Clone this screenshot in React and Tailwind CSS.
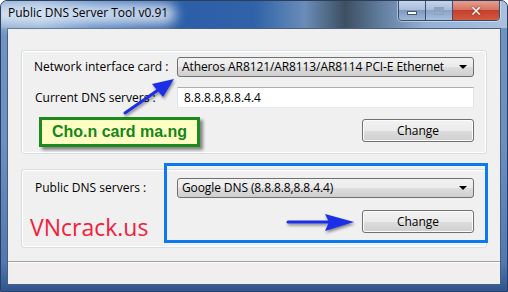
// App.jsx - Public DNS Server Tool window (Win7 style)

const uiFont = { fontFamily: '"Open Sans", "Noto Sans", sans-serif' };

const ComboBox = ({ value, className = "" }) => (
  <div
    className={`flex items-center h-[20px] rounded-[3px] border border-[#707070] bg-[linear-gradient(#f2f2f2_0%,#ebebeb_50%,#dddddd_51%,#cfcfcf_100%)] pl-[4px] pr-[6px] ${className}`}
  >
    <span className="flex-1 whitespace-nowrap text-[12px] text-black leading-none tracking-[-0.1px]">{value}</span>
    <span className="w-0 h-0 border-l-[4px] border-r-[4px] border-t-[4px] border-l-transparent border-r-transparent border-t-black"></span>
  </div>
);

const PushButton = ({ label }) => (
  <button className="w-[112px] h-[23px] rounded-[3px] border border-[#707070] bg-[linear-gradient(#f2f2f2_0%,#ebebeb_50%,#dddddd_51%,#cfcfcf_100%)] text-[12px] text-black leading-none shadow-[inset_0_0_0_1px_#fcfcfc]">
    {label}
  </button>
);

const GroupBox = ({ children, className = "" }) => (
  <div className={`rounded-[3px] border border-[#d5dfe5] shadow-[inset_0_0_0_1px_#ffffff] ${className}`}>
    {children}
  </div>
);

function App() {
  return (
    <div className="w-[508px] h-[292px] bg-white" style={uiFont}>
      <div className="relative w-[508px] h-[292px] overflow-hidden rounded-t-[7px] border border-[#2c3e5a] bg-[linear-gradient(180deg,#6f95c6_0%,#6a8fc2_50%,#4f79b4_90%,#2e5590_100%)]">
        {/* title bar */}
        <div className="relative flex items-start h-[27px] bg-[linear-gradient(90deg,#7fa2cf_0%,#8eaed6_8%,#4f80c0_18%,#2b5ea8_32%,#2f62a8_50%,#6a8db8_60%,#3d4f62_68%,#6683a6_76%,#93b0d6_84%,#a9c1df_100%)]">
          <div className="absolute left-[-10px] top-[2px] w-[185px] h-[22px] rounded-full bg-[#e6eef8] opacity-80 blur-[6px]"></div>
          <span className="relative ml-[7px] mt-[6px] text-[12px] leading-none text-black">
            Public DNS Server Tool v0.91
          </span>
          <div className="absolute top-[-1px] right-[7px] flex h-[21px] rounded-b-[4px] border border-[#3b4e6c] overflow-hidden shadow-[0_0_0_1px_rgba(255,255,255,0.4)]">
            <div className="w-[27px] flex items-center justify-center border-r border-[#3b4e6c] bg-[linear-gradient(#c4d4ea_0%,#a9bedb_45%,#7f99be_50%,#9fb7d8_100%)]">
              <span className="mt-[5px] w-[10px] h-[4px] bg-white border border-[#44546c]"></span>
            </div>
            <div className="w-[27px] flex items-center justify-center border-r border-[#3b4e6c] bg-[linear-gradient(#c4d4ea_0%,#a9bedb_45%,#8aa3c6_50%,#a9bfdd_100%)]">
              <span className="w-[10px] h-[8px] border border-[#8fa2bd] shadow-[inset_0_2px_0_#8fa2bd]"></span>
            </div>
            <div className="w-[46px] flex items-center justify-center bg-[linear-gradient(#e6a090_0%,#d77563_45%,#c4402e_50%,#d4583e_100%)]">
              <span className="text-[14px] font-bold leading-none text-white" style={{ fontFamily: '"DejaVu Sans", sans-serif', textShadow: '0 0 2px #5a1a10' }}>
                ✕
              </span>
            </div>
          </div>
        </div>

        {/* client area */}
        <div className="ml-[6px] mr-[6px] h-[257px] border border-[#4b5d78] bg-[#f0f0f0] flex flex-col">
          <div className="px-[13px] pt-[21px]">
            <GroupBox className="h-[104px] pl-[12px] pr-[11px] pt-[6px]">
              <div className="flex items-center h-[20px]">
                <span className="w-[143px] text-[12px] text-black">Network interface card :</span>
                <ComboBox className="w-[297px]" value="Atheros AR8121/AR8113/AR8114 PCI-E Ethernet" />
              </div>
              <div className="flex items-center h-[21px] mt-[10px]">
                <span className="w-[143px] pl-[1px] text-[12px] text-black">Current DNS servers :</span>
                <div className="w-[297px] h-[21px] flex items-center pl-[6px] bg-white border border-[#abadb3] border-l-[#e2e3ea] border-r-[#e2e3ea] border-b-[#e3e9ef] text-[12px] text-black">
                  8.8.8.8,8.8.4.4
                </div>
              </div>
              <div className="flex justify-end mt-[11px] pr-[1px]">
                <PushButton label="Change" />
              </div>
            </GroupBox>

            <GroupBox className="mt-[15px] h-[79px] pl-[12px] pr-[11px] pt-[8px]">
              <div className="flex items-center h-[20px]">
                <span className="w-[143px] pl-[1px] text-[12px] text-black">Public DNS servers :</span>
                <ComboBox className="w-[297px]" value="Google DNS (8.8.8.8,8.8.4.4)" />
              </div>
              <div className="flex justify-end mt-[12px] pr-[1px]">
                <PushButton label="Change" />
              </div>
            </GroupBox>
          </div>

          <div className="mt-auto h-[23px] border-t border-[#a0a0a0] bg-[#f0eeee] shadow-[inset_0_1px_0_#ffffff]"></div>
        </div>

        {/* annotations laid over the window */}
        <div className="absolute left-[38px] top-[116px] w-[161px] h-[30px] flex items-center justify-center border-[3px] border-[#1c8a1c] bg-[#ffffc4] shadow-[3px_3px_3px_rgba(0,0,0,0.45)]">
          <span className="text-[16px] font-bold text-[#15851a] leading-none" style={{ fontFamily: '"Liberation Sans", Arial, sans-serif' }}>
            Cho.n card ma.ng
          </span>
        </div>

        <div className="absolute left-[163px] top-[162px] w-[324px] h-[80px] border-[3px] border-[#0b7af2]"></div>

        <span className="absolute left-[29px] top-[215px] text-[23px] leading-none text-[#f2203c]">VNcrack.us</span>

        <svg className="absolute left-0 top-0 pointer-events-none" width="508" height="292" viewBox="0 0 508 292">
          <defs>
            <filter id="sh" x="-20%" y="-20%" width="140%" height="140%">
              <feDropShadow dx="1" dy="2" stdDeviation="1.5" floodColor="#000" floodOpacity="0.45" />
            </filter>
          </defs>
          <g filter="url(#sh)" fill="#1a2ee6" stroke="#1a2ee6">
            <line x1="124" y1="112" x2="160" y2="87" strokeWidth="3" strokeLinecap="round" />
            <polygon points="173,78 151,83 162,96" stroke="none" />
            <line x1="287" y1="221" x2="328" y2="221" strokeWidth="3" strokeLinecap="round" />
            <polygon points="353,221 324,213 328,221 324,230" stroke="none" />
          </g>
        </svg>
      </div>
    </div>
  );
}

export default App;
